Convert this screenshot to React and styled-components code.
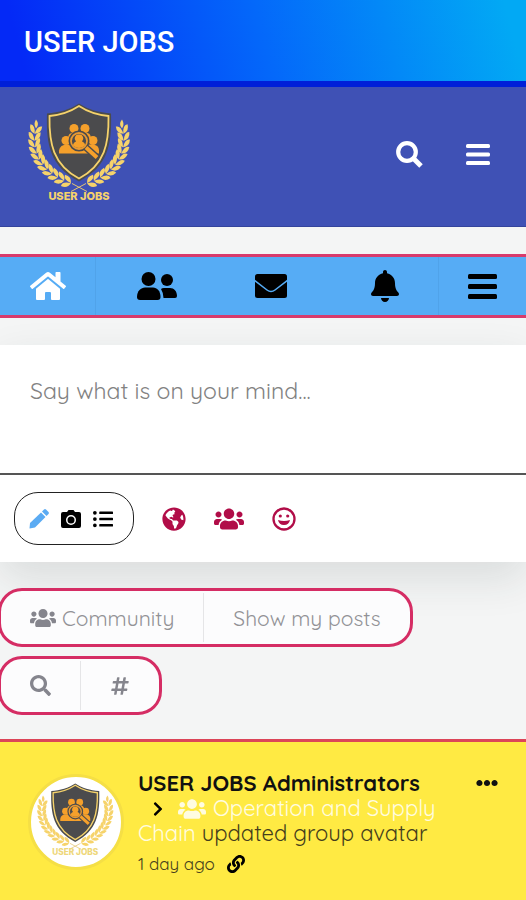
import styled, { createGlobalStyle } from "styled-components";
import {
    FaSearch, FaHome, FaBell, FaUsers, FaListUl,
    FaGlobeAmericas, FaHashtag, FaChevronRight, FaLink, FaEllipsisH
} from "react-icons/fa";

const GlobalStyle = createGlobalStyle`
    * {
        box-sizing: border-box;
    }
    body {
        margin: 0;
        background: #f4f5f5;
        font-family: Quicksand, Lato, "Liberation Sans", sans-serif;
        overflow-x: hidden;
    }
    button {
        display: flex;
        align-items: center;
        justify-content: center;
        padding: 0;
        border: 0;
        background: none;
        color: inherit;
        font: inherit;
        cursor: pointer;
    }
    a {
        color: inherit;
        text-decoration: none;
    }
`;

const AppBar = styled.header`
    padding: 26px 24px 22px;
    border-bottom: 6px solid #001fd8;
    background: linear-gradient(75deg, #0429f6 5%, #0468fa 50%, #02a9f4 96%);
`;

const AppTitle = styled.h1`
    margin: 0;
    font: 500 29px/33px Roboto, sans-serif;
    color: #fff;
`;

const SiteHeader = styled.div`
    display: flex;
    align-items: center;
    justify-content: space-between;
    height: 140px;
    padding: 0 36px 4px 20px;
    background: #3f51b5;
    border-bottom: 1px solid #34449c;
    color: #fff;
`;

const LogoLink = styled.a`
    display: flex;
`;

const HeaderActions = styled.div`
    display: flex;
    gap: 43px;
`;

const Nav = styled.nav`
    display: flex;
    height: 64px;
    margin: 27px 0;
    border: solid #d83b6c;
    border-width: 3px 0;
    background: #56acf5;
`;

const NavLink = styled.a`
    display: flex;
    align-items: center;
    justify-content: center;
    flex: ${props => props.$width ? `0 0 ${props.$width}` : "1"};
    padding-left: ${props => props.$width ? "0" : "8px"};
    color: ${props => props.$active ? "#fff" : "#000"};

    &:first-child {
        border-right: 1px solid #50a3ea;
    }
    &:last-child {
        border-left: 1px solid #50a3ea;
    }
`;

const PostBox = styled.form`
    background: #fff;
    box-shadow: 0 16px 40px rgba(30, 50, 50, 0.12);
`;

const PostInput = styled.textarea`
    display: block;
    width: 100%;
    height: 130px;
    padding: 30px;
    border: 0;
    border-bottom: 2px solid #555;
    background: #fff;
    font: 23px/32px Quicksand, Lato, "Liberation Sans", sans-serif;
    resize: none;

    &::placeholder {
        color: #828282;
        opacity: 1;
    }
`;

const PostTools = styled.div`
    display: flex;
    align-items: center;
    gap: 28px;
    padding: 17px 14px;
    color: #b10d48;
`;

const TypePill = styled.div`
    display: flex;
    align-items: center;
    gap: 12px;
    width: 120px;
    height: 53px;
    padding-left: 14px;
    border: 1px solid #222;
    border-radius: 24px;
    color: #000;
`;

const TypeButton = styled.button`
    color: ${props => props.$active ? "#5babf3" : "#000"};
`;

const Filters = styled.div`
    display: flex;
    flex-direction: column;
    align-items: flex-start;
    gap: 9px;
    margin: 26px 0 24px -2px;
`;

const FilterGroup = styled.div`
    position: relative;
    display: flex;
    height: 59px;
    padding: 2px 0;
    border: 3px solid #d52d64;
    border-radius: 24px;
    background: #fcfcfd;
    color: #929296;
    font-size: 21px;
`;

const FilterButton = styled.button`
    gap: 6px;
    padding: 0 29px;

    & + & {
        border-left: 1px solid #e5e5e7;
    }
    svg {
        color: #85858d;
    }
`;

const Post = styled.article`
    display: flex;
    align-items: flex-start;
    min-height: 162px;
    padding: 29px 28px 28px;
    border-top: 3px solid #dc4558;
    background: #ffea43;
    color: #111;
`;

const Avatar = styled.div`
    display: flex;
    align-items: center;
    justify-content: center;
    flex: none;
    width: 96px;
    height: 96px;
    margin: 3px 14px 0 0;
    border: 3px solid #f5df45;
    border-radius: 50%;
    background: #fff;
`;

const PostBody = styled.div`
    flex: 1;
    min-width: 0;
    font-size: 22px;
    line-height: 25px;
`;

const Author = styled.a`
    display: block;
    font-weight: 700;
`;

const Activity = styled.p`
    margin: 0;
    max-width: 312px;
    color: #453e1c;
`;

const GroupLink = styled.a`
    color: #fffce0;

    svg {
        margin: -6px 7px -6px 12px;
        color: #fffce0;
        vertical-align: -1px;
    }
`;

const Arrow = styled(FaChevronRight)`
    margin-left: 12px;
    color: #000;
    vertical-align: -1px;
`;

const Meta = styled.div`
    display: flex;
    align-items: center;
    gap: 12px;
    margin-top: 5px;
    font-size: 17px;
    color: #453e1c;

    a {
        display: flex;
        color: #000;
    }
`;

const MoreButton = styled.button`
    height: 24px;
`;

function curvePoint(t) {
    const u = 1 - t;
    const x = u * u * u * 16 + 3 * u * u * t * 9 + 3 * u * t * t * 25 + t * t * t * 52;
    const y = u * u * u * 30 + 3 * u * u * t * 56 + 3 * u * t * t * 78 + t * t * t * 86;
    return [x, y];
}

function Branch() {
    const leaves = [];
    for (let i = 0; i < 11; i++) {
        const t = i / 11 + 0.03;
        const [x, y] = curvePoint(t);
        const [x2, y2] = curvePoint(t + 0.02);
        const angle = Math.atan2(y - y2, x - x2) * 180 / Math.PI;
        leaves.push(
            <g key={i} transform={`translate(${x} ${y}) rotate(${angle})`}>
                <path d="M-4 0Q-2.500 -6.500 4.500 -6Q5 -1 -4 0Z" />
                <path d="M-4 0Q-2.500 6.500 4.500 6Q5 1 -4 0Z" />
            </g>
        );
    }
    return (
        <g fill="#f6d36b">
            <path d="M16 22q4 5 0 9q-3 -4 0 -9z" />
            {leaves}
            <path d="M52 86L67 94" fill="none" stroke="#e4c473" strokeWidth="1" />
        </g>
    );
}

function Logo({ size, inAvatar }) {
    return (
        <svg width={size} height={size} viewBox="0 0 120 115" role="img" aria-label="User Jobs">
            <Branch />
            <g transform="translate(118 0) scale(-1 1)"><Branch /></g>
            <path
                d="M59 6C50 12 39 15 27 16C26 47 30 69 59 84C88 69 92 47 91 16C79 15 68 12 59 6Z"
                fill="#4b4b4d"
            />
            <path
                d="M59 8.500C50 14.500 40 17.500 29.500 18.500C29 46 33 67 59 81C85 67 89 46 88.500 18.500C78 17.500 68 14.500 59 8.500Z"
                fill="#4b4b4d" stroke="#f6d36b" strokeWidth="1.800"
            />
            <g fill="#f5a02b">
                <circle cx="54" cy="31" r="4.500" />
                <circle cx="65" cy="31" r="4.500" />
                <path d="M48 41q0-6 6-6h11q6 0 6 6z" />
                <circle cx="46" cy="43" r="4.500" />
                <circle cx="73" cy="43" r="4.500" />
                <path d="M39 56v-3q1-6 8-6h25q7 0 7 6v3z" />
            </g>
            <circle cx="59" cy="43.500" r="9" fill="#4b4b4d" stroke="#4b4b4d" strokeWidth="3" />
            <circle cx="59" cy="43.500" r="8" fill="none" stroke="#e99a32" strokeWidth="1.800" />
            <path d="M59 37a4 4 0 0 1 3 7c3 1 3 3 3 4q-6 5-12 0c0-2 1-3 3-4a4 4 0 0 1 3-7z" fill="#f5a02b" />
            <path d="M66 50L77 60" stroke="#4b4b4d" strokeWidth="7" />
            <path d="M66 50L77 60" stroke="#f5a02b" strokeWidth="4" />
            <text
                x="59" y="102" textAnchor="middle" fontFamily="Inter, Liberation Sans, sans-serif"
                fontWeight="800" fontSize="11" fill={inAvatar ? "#eed77a" : "#f6d36b"}
            >
                USER JOBS
            </text>
        </svg>
    );
}

function SearchIcon() {
    return (
        <svg width="27" height="27" viewBox="0 0 27 27" fill="none" stroke="currentColor" aria-hidden="true">
            <circle cx="11" cy="11" r="8.800" strokeWidth="4.200" />
            <path d="M17.500 17.500L25 25" strokeWidth="5" />
        </svg>
    );
}

function MenuIcon({ width, height, bar }) {
    return (
        <svg width={width} height={height} fill="currentColor" aria-hidden="true">
            <rect width={width} height={bar} rx="1.500" />
            <rect y={(height - bar) / 2} width={width} height={bar} rx="1.500" />
            <rect y={height - bar} width={width} height={bar} rx="1.500" />
        </svg>
    );
}

function PeopleIcon() {
    return (
        <svg width="42" height="30" viewBox="0 0 42 30" aria-hidden="true">
            <circle cx="12.500" cy="8" r="7" />
            <circle cx="31" cy="9" r="6" />
            <path d="M1 26C1 20 5 16.500 9 16.500h8c4 0 7.500 3.500 7.500 9.500q0 3-3 3H4q-3 0-3-3z" />
            <path d="M25 18q1-1 3-1h6c4 0 7 3 7 8q0 2-2 2H27.500q0-5-2.500-9z" />
        </svg>
    );
}

function MailIcon() {
    return (
        <svg width="32" height="24" viewBox="0 0 32 24" aria-hidden="true">
            <rect width="32" height="24" rx="2.500" />
            <path d="M-1 6L12 16q4 3 8 0L33 6" fill="none" stroke="#56acf5" strokeWidth="1.500" />
        </svg>
    );
}

function PencilIcon() {
    return (
        <svg width="20" height="20" viewBox="0 0 20 20" fill="currentColor" aria-hidden="true">
            <path d="M1 14L12 3.500L16.500 8L6 18.500L0.500 19.500Z" />
            <path d="M13 2.500L15 0.500q1-.8 2 0l2.500 2.500q.8 1 0 2L17.500 7Z" />
        </svg>
    );
}

function CameraIcon() {
    return (
        <svg width="20" height="18" viewBox="0 0 20 18" fill="currentColor" aria-hidden="true">
            <path
                fillRule="evenodd"
                d="M2 2h4l1.500-2h5L14 2h4q2 0 2 2v12q0 2-2 2H2q-2 0-2-2V4q0-2 2-2zM10 5a5 5 0 1 0 0 10a5 5 0 1 0 0-10z"
            />
            <circle cx="10" cy="10" r="3.500" />
        </svg>
    );
}

function SmileIcon() {
    return (
        <svg width="24" height="24" viewBox="0 0 24 24" fill="currentColor" aria-hidden="true">
            <circle cx="12" cy="12" r="10.500" fill="none" stroke="currentColor" strokeWidth="2.300" />
            <circle cx="8.300" cy="9" r="1.600" />
            <circle cx="15.700" cy="9" r="1.600" />
            <path d="M6 13q6 2 12 0q-1 5-6 5t-6-5z" />
        </svg>
    );
}

function App() {
    return (
        <>
            <GlobalStyle />
            <AppBar>
                <AppTitle>USER JOBS</AppTitle>
            </AppBar>
            <SiteHeader>
                <LogoLink href="#home"><Logo size={120} /></LogoLink>
                <HeaderActions>
                    <button aria-label="Search"><SearchIcon /></button>
                    <button aria-label="Menu"><MenuIcon width={24} height={21} bar={4} /></button>
                </HeaderActions>
            </SiteHeader>

            <main>
                <Nav>
                    <NavLink href="#home" aria-label="Home" $width="96px" $active><FaHome size={36} /></NavLink>
                    <NavLink href="#friends" aria-label="Friends"><PeopleIcon /></NavLink>
                    <NavLink href="#messages" aria-label="Messages"><MailIcon /></NavLink>
                    <NavLink href="#notifications" aria-label="Notifications"><FaBell size={32} /></NavLink>
                    <NavLink href="#menu" aria-label="Menu" $width="88px"><MenuIcon width={29} height={25} bar={5} /></NavLink>
                </Nav>

                <PostBox>
                    <PostInput aria-label="Post" placeholder="Say what is on your mind..." />
                    <PostTools>
                        <TypePill>
                            <TypeButton type="button" aria-label="Text" $active><PencilIcon /></TypeButton>
                            <TypeButton type="button" aria-label="Photo"><CameraIcon /></TypeButton>
                            <TypeButton type="button" aria-label="Poll"><FaListUl size={20} /></TypeButton>
                        </TypePill>
                        <button type="button" aria-label="Privacy"><FaGlobeAmericas size={24} /></button>
                        <button type="button" aria-label="Group"><FaUsers size={30} /></button>
                        <button type="button" aria-label="Mood"><SmileIcon /></button>
                    </PostTools>
                </PostBox>

                <Filters>
                    <FilterGroup>
                        <FilterButton><FaUsers size={26} />Community</FilterButton>
                        <FilterButton>Show my posts</FilterButton>
                    </FilterGroup>
                    <FilterGroup>
                        <FilterButton aria-label="Search posts"><FaSearch size={21} /></FilterButton>
                        <FilterButton aria-label="Hashtags"><FaHashtag size={20} /></FilterButton>
                    </FilterGroup>
                </Filters>

                <Post>
                    <Avatar><Logo size={90} inAvatar /></Avatar>
                    <PostBody>
                        <Author href="#author">USER JOBS Administrators</Author>
                        <Activity>
                            <Arrow size={16} />
                            <GroupLink href="#group"><FaUsers size={28} />Operation and Supply Chain</GroupLink>
                            {" "}updated group avatar
                        </Activity>
                        <Meta>1 day ago <a href="#post" aria-label="Link"><FaLink size={18} /></a></Meta>
                    </PostBody>
                    <MoreButton aria-label="More"><FaEllipsisH size={22} /></MoreButton>
                </Post>
            </main>
        </>
    );
}

export default App;
